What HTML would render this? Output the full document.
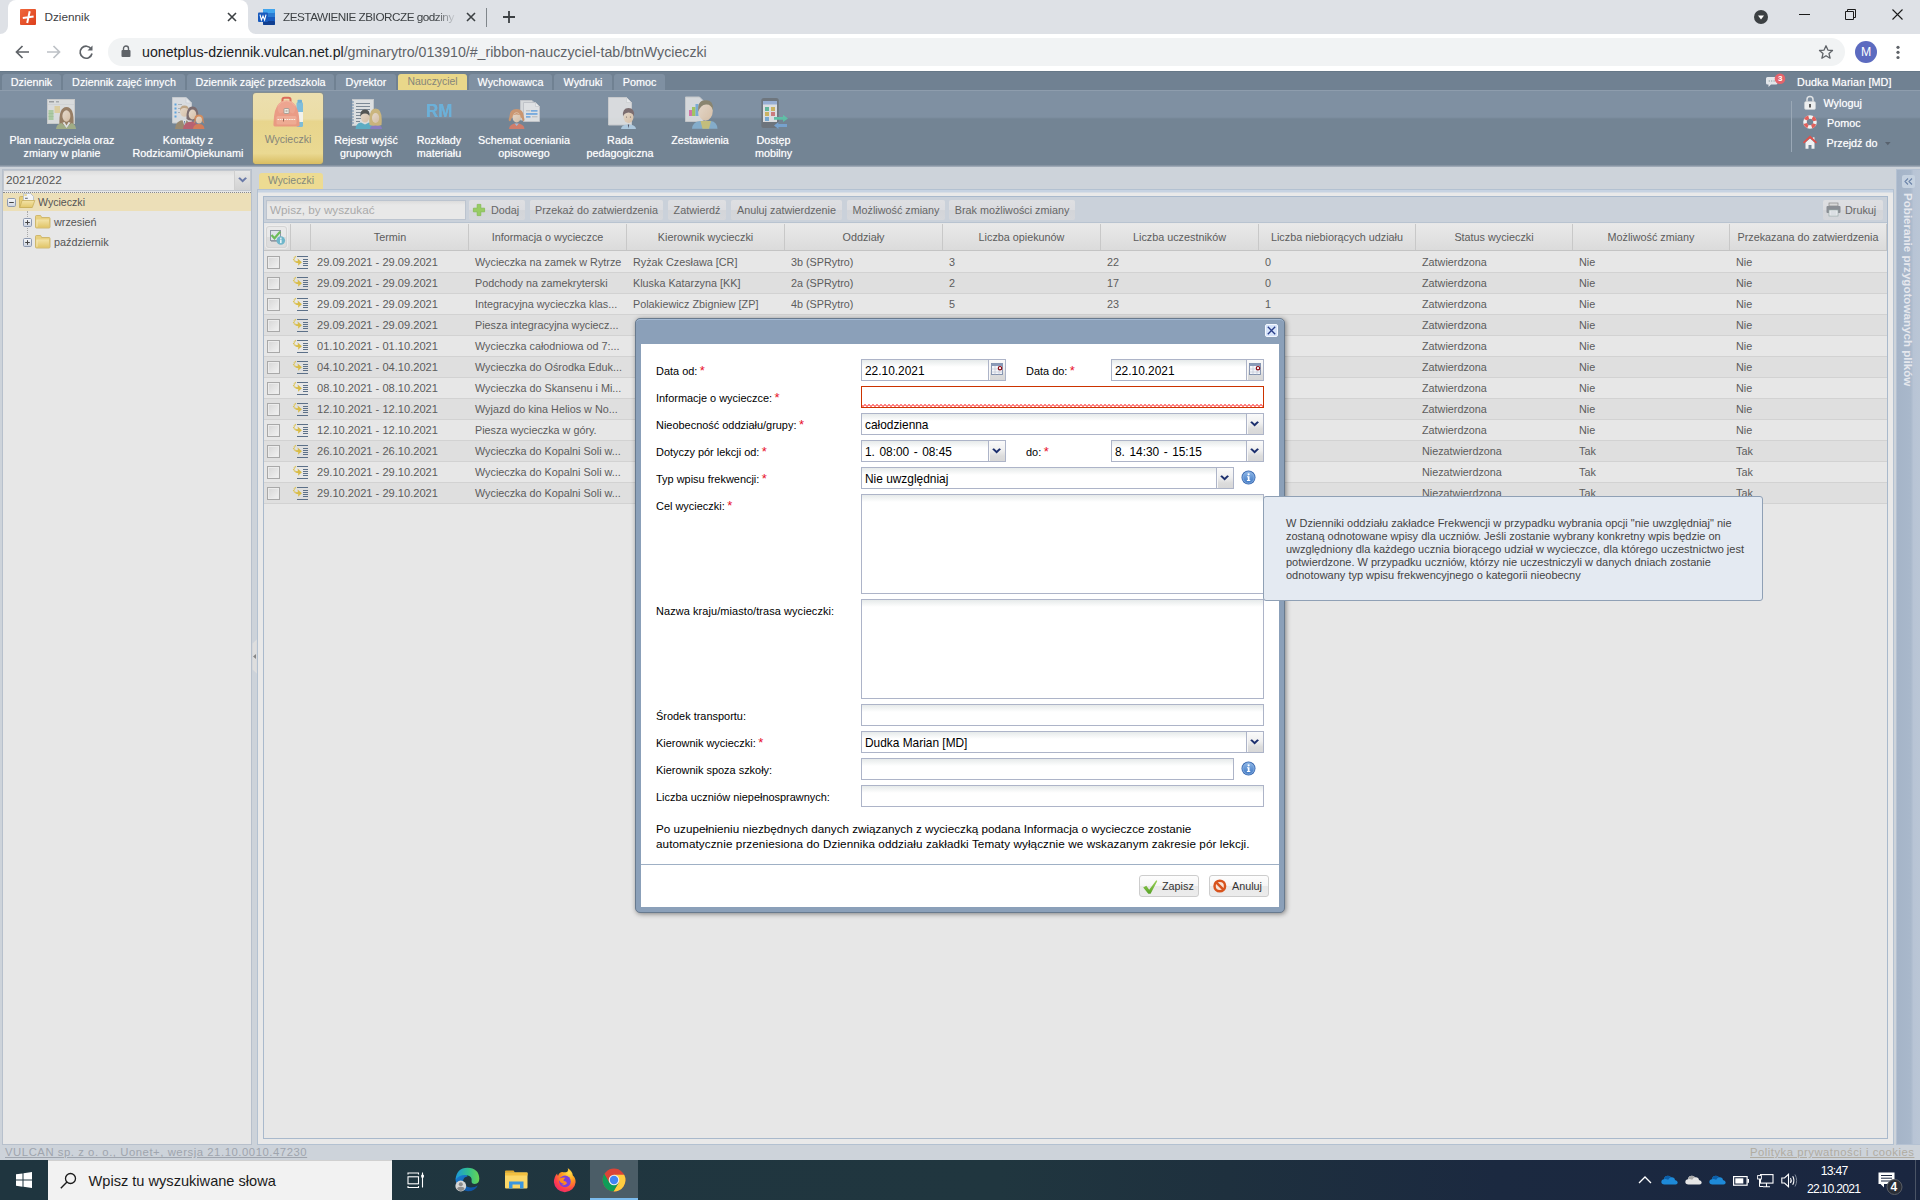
<!DOCTYPE html>
<html><head><meta charset="utf-8"><title>Dziennik</title>
<style>
*{box-sizing:border-box;margin:0;padding:0}
html,body{width:1920px;height:1200px;overflow:hidden;background:#cdd3da;font-family:"Liberation Sans",sans-serif;font-size:11px;color:#555}
.a{position:absolute;white-space:nowrap}
svg{position:absolute;overflow:visible}
/* chrome */
#tabbar{left:0;top:0;width:1920px;height:34px;background:#dee1e6}
#tab1{left:8px;top:0;width:240px;height:34px;background:#fff;border-radius:8px 8px 0 0}
#toolbar{left:0;top:34px;width:1920px;height:37px;background:#fff}
#urlpill{left:108px;top:38px;width:1737px;height:28px;border-radius:14px;background:#f1f3f4}
.ct{font-size:11.75px;color:#3c4043;line-height:14px}
/* ribbon */
#rtabs{left:0;top:71px;width:1920px;height:20px;background:#708192;border-top:1px solid #667888}
.rt{top:74px;height:16px;background:#7f90a2;border-radius:3px 3px 0 0;color:#fff;text-align:center;line-height:16px;font-size:10.8px;text-shadow:0 0 1px rgba(255,255,255,.5)}
#rbody{left:0;top:90px;width:1920px;height:76px;background:linear-gradient(#8e9dad 0,#8e9dad 1px,#7f90a2 1px,#7f90a2 27px,#738494 29px,#738494 100%)}
.rb{color:#fff;text-align:center;font-size:10.8px;line-height:13px;text-shadow:0 0 1px rgba(255,255,255,.6);transform:translateX(-50%)}
.rr{color:#fff;font-size:10.8px;line-height:13px;text-shadow:0 0 1px rgba(255,255,255,.6)}
/* main */
.tb{top:200px;height:20px;background:linear-gradient(#dedfe2 0,#dbdce0 50%,#d3d5d9 50%,#d5d7db 100%);border-radius:2px;color:#666;font-size:10.8px;line-height:20px;text-align:center}
.hd{top:224px;height:26px;line-height:26px;text-align:center;color:#5c5c5c;font-size:10.8px;border-right:1px solid #c8c8c8}
.row{left:264px;width:1623px;height:21px;border-bottom:1px solid #d2d2d2}
.c{top:0;height:20px;line-height:20px;font-size:10.8px;color:#5c5c5c}
.cb{left:3px;top:4px;width:13px;height:13px;border:1px solid #a8a8a8;background:linear-gradient(135deg,#d6d6d6,#f2f2f2);box-shadow:inset 0 0 0 1px #ececec}
/* modal */
.lb{left:656px;color:#000;font-size:10.95px;line-height:14px}
.lb i,.lb2 i{color:#e8102a;font-style:normal;margin-left:2.5px;font-size:13px;line-height:10px;position:relative;top:.4px}
.in{height:22px;border:1px solid #adb4c8;background:linear-gradient(#e6eaea 0,#fff 7px);color:#000;font-size:11.9px;line-height:22px;padding-left:3px}
.tr{width:17px;height:22px;border:1px solid #adb4c8;border-left:0;background:linear-gradient(#fafafa 0,#f0f0f0 45%,#dcdcdc 75%,#d8d8d8 100%);box-shadow:inset 1px 0 0 #f8f8f8}
.btn{top:875px;height:22px;border:1px solid #cdcdcd;border-radius:3px;background:linear-gradient(#fdfdfd 0,#f6f6f6 48%,#e9e9e9 52%,#ececec 100%);color:#333;font-size:10.8px;line-height:20px}
/* taskbar */
#taskbar{left:0;top:1160px;width:1920px;height:40px;background:linear-gradient(90deg,#1f353f 0,#20363f 52%,#1e303e 64%,#1b2940 78%,#1a2640 100%)}
.tk{color:#fff;font-size:12.2px;letter-spacing:-.78px;line-height:14px}
</style></head><body>
<!-- CHROME -->
<div class="a" id="tabbar"></div>
<div class="a" id="tab1"></div>
<svg style="left:0;top:26px" width="8" height="8"><path d="M0 8 H8 V0 A8 8 0 0 1 0 8Z" fill="#fff"/></svg>
<svg style="left:248px;top:26px" width="8" height="8"><path d="M8 8 H0 V0 A8 8 0 0 0 8 8Z" fill="#fff"/></svg>
<!-- favicon 1 -->
<div class="a" style="left:20px;top:9px;width:16px;height:16px;background:linear-gradient(135deg,#f0683c,#dd3f1c);border-radius:1px"></div>
<svg style="left:20px;top:9px" width="16" height="16"><path d="M9.700 2.300 L7.200 14 M2.800 9 L13.600 7.600" stroke="#fff" stroke-width="2" fill="none"/></svg>
<div class="a ct" style="left:44.5px;top:10px">Dziennik</div>
<svg style="left:227px;top:12px" width="10" height="10"><path d="M1 1 L9 9 M9 1 L1 9" stroke="#3c4043" stroke-width="1.6" fill="none"/></svg>
<!-- word icon -->
<svg style="left:258px;top:9px" width="17" height="16"><rect x="5" y="0" width="12" height="16" rx="1" fill="#2b7cd3"/><rect x="5" y="8" width="12" height="4" fill="#185abd"/><rect x="5" y="12" width="12" height="4" rx="1" fill="#103f91"/><rect x="5" y="0" width="12" height="4" rx="1" fill="#41a5ee"/><rect x="0" y="3.5" width="10" height="9.5" rx="1" fill="#185abd"/><path d="M2 5.6 L3.4 11 L5 7 L6.6 11 L8 5.6" stroke="#fff" stroke-width="1.1" fill="none"/></svg>
<div class="a ct" style="left:283px;top:10px;width:173px;overflow:hidden;letter-spacing:-.5px;-webkit-mask-image:linear-gradient(90deg,#000 152px,transparent 174px)">ZESTAWIENIE ZBIORCZE godziny p</div>
<svg style="left:466px;top:12px" width="10" height="10"><path d="M1 1 L9 9 M9 1 L1 9" stroke="#3c4043" stroke-width="1.6" fill="none"/></svg>
<div class="a" style="left:486px;top:8px;width:1px;height:19px;background:#80868b"></div>
<svg style="left:503px;top:11px" width="12" height="12"><path d="M6 0 V12 M0 6 H12" stroke="#3c4043" stroke-width="1.8" fill="none"/></svg>
<!-- window controls -->
<svg style="left:1754px;top:10px" width="14" height="14"><circle cx="7" cy="7" r="7" fill="#3c4043"/><path d="M4 5.5 H10 L7 9.5Z" fill="#fff"/></svg>
<svg style="left:1799px;top:9px" width="11" height="11"><path d="M0 5.5 H11" stroke="#1b1b1b" stroke-width="1"/></svg>
<svg style="left:1845px;top:9px" width="11" height="11"><path d="M0.5 2.5 H8.5 V10.5 H0.5Z M2.5 2.5 V0.5 H10.5 V8.5 H8.5" stroke="#1b1b1b" stroke-width="1" fill="none"/></svg>
<svg style="left:1892px;top:9px" width="11" height="11"><path d="M0.5 0.5 L10.5 10.5 M10.5 0.5 L0.5 10.5" stroke="#1b1b1b" stroke-width="1.1" fill="none"/></svg>
<!-- toolbar -->
<div class="a" id="toolbar"></div>
<svg style="left:15px;top:45px" width="14" height="14"><path d="M14 7 H2 M7.5 1 L1.5 7 L7.5 13" stroke="#5f6368" stroke-width="1.7" fill="none"/></svg>
<svg style="left:47px;top:45px" width="14" height="14"><path d="M0 7 H12 M6.5 1 L12.5 7 L6.5 13" stroke="#bdc1c6" stroke-width="1.7" fill="none"/></svg>
<svg style="left:78px;top:44px" width="16" height="16"><path d="M13.2 5 A6 6 0 1 0 14 9.5" stroke="#5f6368" stroke-width="1.7" fill="none"/><path d="M14.5 1.5 V6.5 H9.5Z" fill="#5f6368"/></svg>
<div class="a" id="urlpill"></div>
<svg style="left:121px;top:45px" width="10" height="12"><rect x="0.5" y="5" width="9" height="7" rx="1" fill="#5f6368"/><path d="M2.5 5.5 V3.5 A2.5 2.5 0 0 1 7.5 3.5 V5.5" stroke="#5f6368" stroke-width="1.4" fill="none"/></svg>
<div class="a" style="left:142px;top:43px;font-size:14.18px;line-height:18px;color:#202124">uonetplus-dziennik.vulcan.net.pl<span style="color:#5f6368">/gminarytro/013910/#_ribbon-nauczyciel-tab/btnWycieczki</span></div>
<svg style="left:1818px;top:44px" width="16" height="16"><path d="M8 1.8 L9.9 6.1 L14.5 6.5 L11 9.6 L12.1 14.2 L8 11.7 L3.9 14.2 L5 9.6 L1.5 6.5 L6.1 6.1Z" stroke="#5f6368" stroke-width="1.3" fill="none" stroke-linejoin="round"/></svg>
<div class="a" style="left:1855px;top:41px;width:22px;height:22px;border-radius:11px;background:#5c6bc0;color:#fff;font-size:12.300px;line-height:22px;text-align:center">M</div>
<svg style="left:1896px;top:45px" width="4" height="15"><circle cx="2" cy="2.3" r="1.6" fill="#5f6368"/><circle cx="2" cy="7.3" r="1.6" fill="#5f6368"/><circle cx="2" cy="12.5" r="1.6" fill="#5f6368"/></svg>
<!-- RIBBON -->
<div class="a" id="rtabs"></div>
<div class="a rt" style="left:2px;width:59px">Dziennik</div>
<div class="a rt" style="left:63px;width:122px">Dziennik zajęć innych</div>
<div class="a rt" style="left:187px;width:147px">Dziennik zajęć przedszkola</div>
<div class="a rt" style="left:336px;width:60px">Dyrektor</div>
<div class="a rt" style="left:398px;width:69px;background:#e9d78a;color:#85857a;text-shadow:none;font-size:10.400px">Nauczyciel</div>
<div class="a rt" style="left:469px;width:83px">Wychowawca</div>
<div class="a rt" style="left:554px;width:58px">Wydruki</div>
<div class="a rt" style="left:614px;width:51px">Pomoc</div>
<div class="a" id="rbody"></div>
<div class="a" style="left:0;top:165px;width:1920px;height:2px;background:linear-gradient(#7b8a99,#a9b3bf)"></div>
<!-- selected button -->
<div class="a" style="left:253px;top:93px;width:70px;height:71px;border-radius:3px;background:linear-gradient(#ecdfaf 0,#ebdda6 36%,#e8d58d 40%,#ead992 85%,#d9bd62 100%);box-shadow:0 0 0 1px rgba(150,140,100,.25)"></div>
<!-- icons -->
<svg style="opacity:.85;left:46px;top:97px" width="32" height="34"><defs><linearGradient id="skin" x1="0" y1="0" x2="1" y2="1"><stop offset="0" stop-color="#f6e6d4"/><stop offset="1" stop-color="#e6c8a8"/></linearGradient></defs><rect x="1.500" y="2.500" width="27" height="24" fill="#e9e9e7" stroke="#d4d4d2"/><rect x="3" y="4" width="5" height="1.500" fill="#a0a0a0"/><rect x="10" y="4" width="3" height="1.500" fill="#b0b0b0"/><rect x="2" y="7" width="26" height=".6" fill="#d8d8d8"/><rect x="8.500" y="9" width="5.500" height="7" fill="#ecd8a0"/><rect x="2.500" y="13" width="5" height="10" fill="#b4d4a4"/><path d="M2.500 16.500 H7.500 M2.500 19.500 H7.500" stroke="#a0c490" stroke-width=".6"/><path d="M13.500 28 Q12.500 10 20.500 10 Q28.500 10 27.500 28Z" fill="#9c7c5c"/><ellipse cx="20.400" cy="19" rx="4" ry="5.800" fill="url(#skin)"/><path d="M10 32 Q10.500 27 15.500 26 L20.500 30.500 L25.500 26 Q29.500 27 30 32Z" fill="#a8b484"/><path d="M16.500 25.800 L20.500 31 L24.500 25.800 L22.500 25 L20.500 28.500 L18.500 25Z" fill="#f4f2ec"/></svg>
<svg style="opacity:.85;left:171px;top:97px" width="34" height="34"><path d="M1.500 .5 H15 L20.500 6 V26 H1.500Z" fill="#e8e9ea" stroke="#d2d4d6"/><path d="M15 .5 V6 H20.500Z" fill="#f6f6f6" stroke="#d2d4d6" stroke-width=".6"/><rect x="3.500" y="6.500" width="2" height="2" fill="#58a8e8"/><rect x="3.500" y="10.500" width="2" height="2" fill="#58a8e8"/><rect x="3.500" y="14.500" width="2" height="2" fill="#58a8e8"/><rect x="3.500" y="18.500" width="2" height="2" fill="#58a8e8"/><path d="M7 7.500 H11 M7 11.500 H10 M7 15.500 H9" stroke="#a8a8a8" stroke-width=".8"/><path d="M4 32 Q4.500 23 13.500 23 Q19 23 19 32Z" fill="#a08c6c"/><path d="M11.500 23 L13.500 29 L15.500 23Z" fill="#f4f4f4"/><path d="M13 24 L13.500 28.500 L14 24Z" fill="#5878a8"/><ellipse cx="13.400" cy="14.500" rx="4.300" ry="5.300" fill="url(#skin)"/><path d="M9 14 Q8.500 8.500 13.500 8.500 Q18 8.500 17.800 13 Q16 10.500 13 11 Q10 11 9 14Z" fill="#c8a880"/><path d="M12 32 Q12.500 24.500 21.500 24.500 Q26.500 24.500 26.500 32Z" fill="#c45c6c"/><path d="M15.500 22 Q15 9.500 21.500 9.500 Q28 9.500 27.500 22 Q25 24 21.500 23.500 Q18 24 15.500 22Z" fill="#7c6868"/><ellipse cx="21.500" cy="17.500" rx="3.800" ry="5" fill="url(#skin)"/><path d="M22 32 Q22.500 27 28 27 Q33 27 33.500 32Z" fill="#e47c50"/><path d="M23.500 23.500 Q22.500 17.500 28 17.500 Q33 17.500 32.500 23.500 L33.500 27 Q31 25 30.500 22 L25.500 22 Q25 25 22.500 27Z" fill="#e08c54"/><ellipse cx="28" cy="23" rx="3" ry="3.500" fill="url(#skin)"/></svg>
<svg style="opacity:.85;left:272px;top:96px" width="34" height="34"><rect x="24.500" y="6" width="6.500" height="25" rx="1.500" fill="#6cb8e4"/><rect x="25.500" y="3.800" width="4.500" height="3" rx=".8" fill="#58a8dc"/><rect x="24.500" y="16" width="6.500" height="10" fill="#f4f6f8"/><path d="M10.500 6 V3.500 Q10.500 1.800 12.500 1.800 H16.500 Q18.500 1.800 18.500 3.500 V6" stroke="#d8584c" stroke-width="2" fill="none"/><path d="M3 30.500 Q1 30.500 1.500 27 Q2 12 7 7.500 Q10 4.500 14.500 4.500 Q19 4.500 22 7.500 Q27 12 27.500 27 Q28 30.500 26 30.500Z" fill="#ea9080"/><path d="M5.500 10 Q9 5 14.500 5 Q20 5 23.500 10 Q24 15 21 17.500 Q14.500 14 8 17.500 Q5 15 5.500 10Z" fill="#ee9c8c"/><path d="M5.500 10 Q9 5 14.500 5 Q20 5 23.500 10" stroke="#f4b4a4" stroke-width=".8" fill="none"/><rect x="12" y="12.500" width="5" height="5" rx=".8" fill="#ececec" stroke="#8c8c8c" stroke-width=".8"/><rect x="13.500" y="14" width="2" height="2" fill="#b4b4b4"/><path d="M4.500 21.500 Q4.500 20 6 20 H23 Q24.500 20 24.500 21.500 V27 Q24.500 28.500 23 28.500 H6 Q4.500 28.500 4.500 27Z" fill="#f0a494"/><path d="M5.500 23.500 H23.500" stroke="#fff" stroke-width=".9" stroke-dasharray="1.600 .7"/><rect x="11" y="22.500" width="1" height="3" fill="#8c5048"/></svg>
<svg style="opacity:.85;left:350px;top:97px" width="34" height="34"><rect x="2.500" y="2.500" width="21" height="26" fill="#ededec" stroke="#d0d2d4"/><path d="M6 6.500 H20 M6 9.500 H20 M6 12.500 H20 M6 15.500 H14 M6 18.500 H12 M6 21.500 H11 M6 24.500 H10" stroke="#7c8894" stroke-width="1"/><path d="M.8 5 H4 M.8 8 H4 M.8 11 H4 M.8 14 H4 M.8 17 H4 M.8 20 H4 M.8 23 H4 M.8 26 H4" stroke="#6c8cac" stroke-width="1.100"/><path d="M5.500 32 Q6 26 11 25.500 L15 27.500 L19 25.500 Q24 26 24.500 32Z" fill="#58b4cc"/><ellipse cx="15" cy="20" rx="4.300" ry="5.500" fill="url(#skin)"/><path d="M10.500 20 Q9.500 12.500 15 12.500 Q20.500 12.500 19.500 20 Q19 16.500 15 16.500 Q11 16.500 10.500 20Z" fill="#4c4a46"/><path d="M20 32 Q20.500 27.500 26 27.500 Q31.500 27.500 32 32Z" fill="#8c7cc8"/><path d="M19.500 28 Q18 11.500 25.500 11.500 Q33 11.500 31.500 28 Q29 29 25.500 28.500 Q22 29 19.500 28Z" fill="#d8bc78"/><ellipse cx="25.600" cy="21" rx="3.600" ry="5" fill="url(#skin)"/></svg>
<div class="a" style="left:425.500px;top:100px;font-weight:bold;font-size:18.700px;line-height:22px;color:#6cb0d8;transform:scaleX(.905);transform-origin:0 0;text-shadow:0 0 .6px #6cb0d8">RM</div>
<svg style="opacity:.85;left:508px;top:97px" width="34" height="34"><path d="M12.500 3.500 H24 L28 7.500 V23 H12.500Z" fill="#e4e5e6" stroke="#cccdd0"/><path d="M15.500 5.500 H27.500 L31.500 9.500 V24.500 H15.500Z" fill="#efefef" stroke="#cccdd0"/><path d="M27.500 5.500 V9.500 H31.500Z" fill="#fafafa" stroke="#cccdd0" stroke-width=".6"/><path d="M18 13.800 H22.500 M18 16.800 H18 M24 19.800 H29.500" stroke="#b8b8b8" stroke-width=".9"/><rect x="23" y="13" width="6.500" height="1.700" fill="#78b0e8"/><rect x="18" y="16" width="11.500" height="1.900" fill="#78b0e8"/><rect x="18" y="19" width="4.500" height="1.700" fill="#78b0e8"/><path d="M1 32 Q1.500 26.500 8.500 26.500 Q16 26.500 16.500 32Z" fill="#e07c64"/><path d="M6.500 26.500 L8.600 29 L10.800 26.500Z" fill="#a8c4e4"/><path d="M2.500 24 Q-.5 25 1.500 19.500 Q1.500 12 8.600 12 Q15.500 12 15.800 19.500 Q17.500 25 14.800 24 Q14 21 13 20.500 L4.300 20.500 Q3.500 21 2.500 24Z" fill="#d89868"/><ellipse cx="8.600" cy="20.500" rx="4" ry="5" fill="url(#skin)"/><path d="M4.500 18.500 Q8.600 13.500 12.800 18.500 Q8.600 16.500 4.500 18.500Z" fill="#d89868"/></svg>
<svg style="opacity:.85;left:607px;top:96px" width="32" height="36"><path d="M1.500 1.500 H19.500 L24.500 6.500 V29 H1.500Z" fill="#e8e8e8" stroke="#d4d4d4"/><path d="M19.500 1.500 V6.500 H24.500Z" fill="#f8f8f8" stroke="#d4d4d4" stroke-width=".6"/><path d="M14 33 Q14.500 28.500 21.500 28.500 Q28.500 28.500 29 33Z" fill="#b8d4ea"/><path d="M20.800 28.500 L21.500 32.500 L22.200 28.500Z" fill="#4c4c5c"/><ellipse cx="21.500" cy="21" rx="5" ry="6" fill="url(#skin)"/><path d="M16 20.500 Q15 12 21.500 12 Q28 12 27 20.500 Q26 17 21.500 16.500 Q17 17 16 20.500Z" fill="#7c6868"/><circle cx="19.500" cy="21" r=".6" fill="#6c5c54"/><circle cx="23.500" cy="21" r=".6" fill="#6c5c54"/></svg>
<svg style="opacity:.85;left:684px;top:96px" width="36" height="36"><path d="M1.500 1 H15.500 L19 4.500 V25.500 H1.500Z" fill="#e5e5e5" stroke="#d0d0d0"/><rect x="5" y="14" width="3" height="6" fill="#e070a8"/><rect x="8" y="11" width="3.500" height="9" fill="#a8cc58"/><rect x="11.500" y="8" width="3" height="12" fill="#78b0dc"/><path d="M8 32.800 Q8.500 26 16 25 H27 Q33 26 33.500 32.800Z" fill="#88b4d4"/><path d="M16.500 25 L18.500 32.800 H25 L27 25Z" fill="#d0c878"/><ellipse cx="21.500" cy="14.700" rx="7.300" ry="10" fill="url(#skin)"/><path d="M14.300 16 Q13 4 21.500 4.300 Q30 4 28.800 14 Q27 8 22 8.500 Q16.500 8.500 14.300 16Z" fill="#8c8468"/></svg>
<svg style="opacity:.85;left:760px;top:97px" width="32" height="34"><rect x="1.300" y="1" width="17.500" height="30" rx="2.500" fill="#6c7278"/><rect x="3" y="4" width="14" height="21" fill="#ececec"/><rect x="3" y="4" width="14" height="3.500" fill="#9cb4dc"/><rect x="5" y="10" width="4" height="4" fill="#5cbc9c"/><rect x="11" y="10" width="4" height="4" fill="#d8b858"/><rect x="5" y="15" width="4" height="4" fill="#d8b858"/><rect x="11" y="15" width="4" height="4" fill="#d87878"/><rect x="5" y="20" width="4" height="4" fill="#78b0dc"/><path d="M14 20 H23 V17.700 L28 21.400 L23 25 V22.800 H14Z" fill="#5cc8a8"/><path d="M27 27 H18.500 V25 L14 28.500 L18.500 32 V30 H27Z" fill="#78a8d8"/></svg>
<!-- labels -->
<div class="a rb" style="left:62px;top:134px">Plan nauczyciela oraz<br>zmiany w planie</div>
<div class="a rb" style="left:188px;top:134px">Kontakty z<br>Rodzicami/Opiekunami</div>
<div class="a rb" style="left:288px;top:133px;color:#85857a;text-shadow:none;font-size:10.500px">Wycieczki</div>
<div class="a rb" style="left:366px;top:134px">Rejestr wyjść<br>grupowych</div>
<div class="a rb" style="left:439px;top:134px">Rozkłady<br>materiału</div>
<div class="a rb" style="left:524px;top:134px">Schemat oceniania<br>opisowego</div>
<div class="a rb" style="left:620px;top:134px">Rada<br>pedagogiczna</div>
<div class="a rb" style="left:700px;top:134px">Zestawienia</div>
<div class="a rb" style="left:773.500px;top:134px">Dostęp<br>mobilny</div>
<!-- right user area -->
<svg style="left:1765px;top:76px" width="22" height="12"><path d="M1 2.500 Q1 1 2.500 1 H11 Q12.500 1 12.500 2.500 V7 Q12.500 8.500 11 8.500 H6 L3.500 11 V8.500 H2.500 Q1 8.500 1 7Z" fill="#e3e6ea"/><circle cx="4.300" cy="5" r=".7" fill="#9aa"/><circle cx="6.700" cy="5" r=".7" fill="#9aa"/><circle cx="9.100" cy="5" r=".7" fill="#9aa"/><circle cx="15" cy="2.700" r="5.300" fill="#e4646c"/></svg>
<div class="a" style="left:1778px;top:73.500px;font-size:8px;font-weight:bold;color:#fff;line-height:9px">3</div>
<div class="a rr" style="left:1797px;top:75.500px;letter-spacing:.09px">Dudka Marian [MD]</div>
<div class="a" style="left:1791px;top:101px;width:1px;height:51px;background:#9aa8b6"></div>
<svg style="left:1804px;top:95px" width="12" height="15"><path d="M3 7 V4.500 A3 3 0 0 1 9 4.500 V7" stroke="#dfe2e5" stroke-width="1.500" fill="none"/><rect x=".5" y="6.500" width="11" height="8" rx="1.500" fill="#eceeef" stroke="#c9ccd0" stroke-width=".6"/><rect x="5" y="9" width="2" height="3.500" fill="#5a5a5a"/></svg>
<div class="a rr" style="left:1823.500px;top:96.500px">Wyloguj</div>
<svg style="left:1803px;top:115px" width="14" height="14"><circle cx="7" cy="7" r="5" fill="none" stroke="#f2f2f2" stroke-width="3.600"/><circle cx="7" cy="7" r="5" fill="none" stroke="#e0605c" stroke-width="3.600" stroke-dasharray="3.927 3.927" stroke-dashoffset="-1.960"/></svg>
<div class="a rr" style="left:1827px;top:116.500px">Pomoc</div>
<svg style="left:1803px;top:135px" width="14" height="14"><rect x="9.800" y="2.300" width="1.700" height="3.500" fill="#e8e8e8"/><path d="M2.500 7.500 V13.800 H5.500 V10 H8.500 V13.800 H11.500 V7.500 L7 3.500Z" fill="#f0f1f2"/><path d="M.5 7.800 L7 1.800 L13.500 7.800" stroke="#e0504a" stroke-width="1.800" fill="none"/></svg>
<div class="a rr" style="left:1826.500px;top:136.500px">Przejdź do</div>
<svg style="left:1885px;top:142px" width="6" height="4"><path d="M0 0 H5.600 L2.800 3.200Z" fill="#58626e"/></svg>
<!-- MAIN -->
<div class="a" style="left:2px;top:169px;width:250px;height:976px;border:1px solid #b7c0cc;background:#e7e7e7"></div>
<div class="a" style="left:3px;top:170px;width:231px;height:21px;border:1px solid #c2c7ce;border-right:0;background:linear-gradient(#dedede,#e9e9e9 5px);color:#555;font-size:11.8px;line-height:19px;padding-left:2px">2021/2022</div>
<div class="a" style="left:234px;top:170px;width:17px;height:21px;border:1px solid #c2c7ce;border-left:1px solid #cfcfcf;background:linear-gradient(#e6e6e6,#d2d2d2)"></div>
<svg style="left:237.700px;top:177px" width="10" height="6"><path d="M.2 1.300 L1.900 .3 L4.600 2.700 L7.300 .3 L9 1.300 L4.600 5.500Z" fill="#6a7aa8"/></svg>
<div class="a" style="left:3px;top:192px;width:248px;height:1px;border-top:1px dotted #8a8a8a"></div>
<div class="a" style="left:3px;top:193px;width:248px;height:18px;background:#ecdfb8"></div>
<svg width="0" height="0"><defs><linearGradient id="exg" x1="0" y1="0" x2="0" y2="1"><stop offset="0" stop-color="#f8f9fb"/><stop offset="1" stop-color="#ccd3df"/></linearGradient><linearGradient id="fog" x1="0" y1="0" x2="0" y2="1"><stop offset="0" stop-color="#f3e3a8"/><stop offset="1" stop-color="#e2c76c"/></linearGradient></defs></svg>
<div class="a" style="left:27px;top:211px;width:0;height:28px;border-left:1px dotted #a8a8a8"></div>
<svg style="left:7px;top:198px" width="9" height="9"><rect x=".5" y=".5" width="8" height="8" rx="1.200" fill="url(#exg)" stroke="#8e9ab0"/><path d="M2.200 4.500 H6.800" stroke="#444" stroke-width="1"/></svg>
<svg style="left:18px;top:192px" width="18" height="18"><path d="M1.500 5.500 Q1.500 4.500 2.500 4.500 H5.500 L6.500 5.500 H13.500 V15.500 H1.500Z" fill="#e6cd78" stroke="#c9ae5c" stroke-width=".8"/><path d="M5.500 1.500 H12.500 L15.500 4.500 V9 H5.500Z" fill="#f2f4f7" stroke="#b4bcc8" stroke-width=".8"/><rect x="6.300" y="2.300" width="2.500" height="1.500" fill="#e8cf7c"/><path d="M7 6.300 H9.800" stroke="#6a7080" stroke-width="1.100"/><path d="M1.800 15.500 L4 8.500 H16.800 L14.300 15.500Z" fill="url(#fog)" stroke="#c9ae5c" stroke-width=".8"/></svg>
<div class="a" style="left:38px;top:195px;font-size:10.600px;line-height:14px;color:#555">Wycieczki</div>
<svg style="left:23px;top:218px" width="9" height="9"><rect x=".5" y=".5" width="8" height="8" rx="1.200" fill="url(#exg)" stroke="#8e9ab0"/><path d="M2.200 4.500 H6.800 M4.500 2.200 V6.800" stroke="#444" stroke-width="1"/></svg>
<svg style="left:35px;top:215px" width="16" height="14"><path d="M.5 1.500 Q.5 .5 1.500 .5 H5 Q6 .5 6.300 1.500 L6.600 2.500 H14 Q15 2.500 15 3.500 V12 Q15 13 14 13 H1.500 Q.5 13 .5 12Z" fill="#e8d080" stroke="#c9ae5c" stroke-width=".8"/><path d="M1.500 4.500 H14 V12 H1.500Z" fill="url(#fog)"/><path d="M2 4.800 V11.800" stroke="#f8ecc0" stroke-width=".8"/></svg>
<div class="a" style="left:54px;top:215px;font-size:10.800px;line-height:14px;color:#555">wrzesień</div>
<svg style="left:23px;top:238px" width="9" height="9"><rect x=".5" y=".5" width="8" height="8" rx="1.200" fill="url(#exg)" stroke="#8e9ab0"/><path d="M2.200 4.500 H6.800 M4.500 2.200 V6.800" stroke="#444" stroke-width="1"/></svg>
<svg style="left:35px;top:235px" width="16" height="14"><path d="M.5 1.500 Q.5 .5 1.500 .5 H5 Q6 .5 6.300 1.500 L6.600 2.500 H14 Q15 2.500 15 3.500 V12 Q15 13 14 13 H1.500 Q.5 13 .5 12Z" fill="#e8d080" stroke="#c9ae5c" stroke-width=".8"/><path d="M1.500 4.500 H14 V12 H1.500Z" fill="url(#fog)"/><path d="M2 4.800 V11.800" stroke="#f8ecc0" stroke-width=".8"/></svg>
<div class="a" style="left:54px;top:235px;font-size:10.800px;line-height:14px;color:#555">październik</div>
<svg style="left:252px;top:639px" width="5" height="35"><path d="M.5 4.500 L4.800 .5 V34.500 L.5 30.500Z" fill="#dedede"/><path d="M4 15 L1 17.500 L4 20Z" fill="#858585"/></svg>
<div class="a" style="left:259px;top:173px;width:64px;height:16px;background:#eddb92;border-radius:3px 3px 0 0;color:#83897c;font-size:10.400px;line-height:16px;text-align:center">Wycieczki</div>
<div class="a" style="left:257px;top:189px;width:1637px;height:956px;border:1px solid #b3c1d1;background:linear-gradient(#c7d3e2 0,#c7d3e2 2px,#e9e9e9 3px,#e9e9e9 100%)"></div>
<div class="a" style="left:263px;top:196px;width:1625px;height:943px;border:1px solid #a9b9cc;background:#e7e7e7"></div>
<div class="a" style="left:264px;top:197px;width:1623px;height:26px;background:#cad1da;border-bottom:1px solid #b8c3d0"></div>
<div class="a" style="left:266px;top:200px;width:200px;height:20px;border:1px solid #bcc4cf;background:linear-gradient(#dcdcdc,#e8e8e8 4px);color:#aaa;font-size:11.7px;line-height:18px;padding-left:3px">Wpisz, by wyszukać</div>
<div class="a tb" style="left:469px;width:56px;text-align:left;padding-left:22px">Dodaj</div>
<svg style="left:473px;top:204px" width="12" height="12"><path d="M4.200 .4 H7.800 V4.200 H11.600 V7.800 H7.800 V11.600 H4.200 V7.800 H.4 V4.200 H4.200Z" fill="#98cc64" stroke="#84bc50" stroke-width=".8"/></svg>
<div class="a tb" style="left:530px;width:133px">Przekaż do zatwierdzenia</div>
<div class="a tb" style="left:668px;width:58px">Zatwierdź</div>
<div class="a tb" style="left:731px;width:111px">Anuluj zatwierdzenie</div>
<div class="a tb" style="left:847px;width:98px">Możliwość zmiany</div>
<div class="a tb" style="left:949px;width:126px">Brak możliwości zmiany</div>
<div class="a tb" style="left:1823px;width:60px;text-align:left;padding-left:22px">Drukuj</div>
<svg style="left:1826px;top:202px" width="15" height="15"><rect x="3" y="1" width="9" height="3" fill="#d8d8d8" stroke="#8a8a8a" stroke-width=".7"/><rect x=".5" y="4" width="14" height="7" rx="1" fill="#8a8e94"/><rect x="3" y="8" width="9" height="6" fill="#eef0f2" stroke="#9aa" stroke-width=".7"/><path d="M4.500 10 H10.500 M4.500 12 H10.500" stroke="#b8c0c8" stroke-width=".7"/></svg>
<div class="a" style="left:264px;top:224px;width:1623px;height:27px;background:linear-gradient(#e9e9e9,#dbdbdb);border-bottom:1px solid #c4c4c4"></div>
<div class="a hd" style="left:264px;width:27px"></div>
<div class="a" style="left:266px;top:226px;width:21px;height:22px;border:1px solid #d4d4d4;border-radius:3px;background:linear-gradient(#e9e9e9 50%,#dddddd 50%);box-shadow:0 0 0 1px rgba(240,240,240,.7)"></div>
<svg style="left:269px;top:229px" width="18" height="18"><rect x="1.500" y="1.500" width="10" height="10" fill="#dfe3ea" stroke="#8c96a2" stroke-width="1"/><path d="M2 12.300 H10" stroke="#9aa2ac" stroke-width="1"/><path d="M2.500 6 L5.500 9.300 L11.200 2.600" stroke="#6cbc58" stroke-width="2.200" fill="none"/><circle cx="11.800" cy="11.500" r="4.300" fill="#6fb6ca"/><rect x="11.200" y="10.500" width="1.300" height="3.600" fill="#fff"/><rect x="11.200" y="8.600" width="1.300" height="1.300" fill="#fff"/></svg>
<div class="a hd" style="left:291px;width:20px"></div>
<div class="a hd" style="left:312px;width:157px">Termin</div>
<div class="a hd" style="left:469px;width:158px">Informacja o wycieczce</div>
<div class="a hd" style="left:627px;width:158px">Kierownik wycieczki</div>
<div class="a hd" style="left:785px;width:158px">Oddziały</div>
<div class="a hd" style="left:943px;width:158px">Liczba opiekunów</div>
<div class="a hd" style="left:1101px;width:158px">Liczba uczestników</div>
<div class="a hd" style="left:1259px;width:157px">Liczba niebiorących udziału</div>
<div class="a hd" style="left:1416px;width:157px">Status wycieczki</div>
<div class="a hd" style="left:1573px;width:157px">Możliwość zmiany</div>
<div class="a hd" style="left:1730px;width:157px">Przekazana do zatwierdzenia</div>
<div class="a row" style="top:252px;background:#e7e7e7">
<div class="a cb"></div>
<svg style="left:28px;top:3px" width="17" height="15"><path d="M5 1.500 H16 M5 13.500 H16 M11 4.500 H16 M11 6.500 H16 M11 8.500 H16 M11 10.500 H16" stroke="#5c7088" stroke-width="1"/><path d="M3.800 1.300 L1.600 3.800 Q1.800 6.500 6 7.200" stroke="#dcc458" stroke-width="1.500" fill="none" stroke-dasharray="1.200 .5"/><path d="M5.600 3.600 L9.900 7.300 L6 10.800 L6.300 8.300 Q4 8.300 2.500 6.500 L5.900 6.200Z" fill="#d8bc48"/></svg>
<div class="a c" style="left:53px;font-size:11.1px">29.09.2021 - 29.09.2021</div>
<div class="a c" style="left:211px">Wycieczka na zamek w Rytrze</div>
<div class="a c" style="left:369px">Ryżak Czesława [CR]</div>
<div class="a c" style="left:527px">3b (SPRytro)</div>
<div class="a c" style="left:685px">3</div>
<div class="a c" style="left:843px">22</div>
<div class="a c" style="left:1001px">0</div>
<div class="a c" style="left:1158px">Zatwierdzona</div>
<div class="a c" style="left:1315px">Nie</div>
<div class="a c" style="left:1472px">Nie</div>
</div>
<div class="a row" style="top:273px;background:#dfdfdf">
<div class="a cb"></div>
<svg style="left:28px;top:3px" width="17" height="15"><path d="M5 1.500 H16 M5 13.500 H16 M11 4.500 H16 M11 6.500 H16 M11 8.500 H16 M11 10.500 H16" stroke="#5c7088" stroke-width="1"/><path d="M3.800 1.300 L1.600 3.800 Q1.800 6.500 6 7.200" stroke="#dcc458" stroke-width="1.500" fill="none" stroke-dasharray="1.200 .5"/><path d="M5.600 3.600 L9.900 7.300 L6 10.800 L6.300 8.300 Q4 8.300 2.500 6.500 L5.900 6.200Z" fill="#d8bc48"/></svg>
<div class="a c" style="left:53px;font-size:11.1px">29.09.2021 - 29.09.2021</div>
<div class="a c" style="left:211px">Podchody na zamekryterski</div>
<div class="a c" style="left:369px">Kluska Katarzyna [KK]</div>
<div class="a c" style="left:527px">2a (SPRytro)</div>
<div class="a c" style="left:685px">2</div>
<div class="a c" style="left:843px">17</div>
<div class="a c" style="left:1001px">0</div>
<div class="a c" style="left:1158px">Zatwierdzona</div>
<div class="a c" style="left:1315px">Nie</div>
<div class="a c" style="left:1472px">Nie</div>
</div>
<div class="a row" style="top:294px;background:#e7e7e7">
<div class="a cb"></div>
<svg style="left:28px;top:3px" width="17" height="15"><path d="M5 1.500 H16 M5 13.500 H16 M11 4.500 H16 M11 6.500 H16 M11 8.500 H16 M11 10.500 H16" stroke="#5c7088" stroke-width="1"/><path d="M3.800 1.300 L1.600 3.800 Q1.800 6.500 6 7.200" stroke="#dcc458" stroke-width="1.500" fill="none" stroke-dasharray="1.200 .5"/><path d="M5.600 3.600 L9.900 7.300 L6 10.800 L6.300 8.300 Q4 8.300 2.500 6.500 L5.900 6.200Z" fill="#d8bc48"/></svg>
<div class="a c" style="left:53px;font-size:11.1px">29.09.2021 - 29.09.2021</div>
<div class="a c" style="left:211px">Integracyjna wycieczka klas...</div>
<div class="a c" style="left:369px">Polakiewicz Zbigniew [ZP]</div>
<div class="a c" style="left:527px">4b (SPRytro)</div>
<div class="a c" style="left:685px">5</div>
<div class="a c" style="left:843px">23</div>
<div class="a c" style="left:1001px">1</div>
<div class="a c" style="left:1158px">Zatwierdzona</div>
<div class="a c" style="left:1315px">Nie</div>
<div class="a c" style="left:1472px">Nie</div>
</div>
<div class="a row" style="top:315px;background:#dfdfdf">
<div class="a cb"></div>
<svg style="left:28px;top:3px" width="17" height="15"><path d="M5 1.500 H16 M5 13.500 H16 M11 4.500 H16 M11 6.500 H16 M11 8.500 H16 M11 10.500 H16" stroke="#5c7088" stroke-width="1"/><path d="M3.800 1.300 L1.600 3.800 Q1.800 6.500 6 7.200" stroke="#dcc458" stroke-width="1.500" fill="none" stroke-dasharray="1.200 .5"/><path d="M5.600 3.600 L9.900 7.300 L6 10.800 L6.300 8.300 Q4 8.300 2.500 6.500 L5.900 6.200Z" fill="#d8bc48"/></svg>
<div class="a c" style="left:53px;font-size:11.1px">29.09.2021 - 29.09.2021</div>
<div class="a c" style="left:211px">Piesza integracyjna wyciecz...</div>
<div class="a c" style="left:1158px">Zatwierdzona</div>
<div class="a c" style="left:1315px">Nie</div>
<div class="a c" style="left:1472px">Nie</div>
</div>
<div class="a row" style="top:336px;background:#e7e7e7">
<div class="a cb"></div>
<svg style="left:28px;top:3px" width="17" height="15"><path d="M5 1.500 H16 M5 13.500 H16 M11 4.500 H16 M11 6.500 H16 M11 8.500 H16 M11 10.500 H16" stroke="#5c7088" stroke-width="1"/><path d="M3.800 1.300 L1.600 3.800 Q1.800 6.500 6 7.200" stroke="#dcc458" stroke-width="1.500" fill="none" stroke-dasharray="1.200 .5"/><path d="M5.600 3.600 L9.900 7.300 L6 10.800 L6.300 8.300 Q4 8.300 2.500 6.500 L5.900 6.200Z" fill="#d8bc48"/></svg>
<div class="a c" style="left:53px;font-size:11.1px">01.10.2021 - 01.10.2021</div>
<div class="a c" style="left:211px">Wycieczka całodniowa od 7:...</div>
<div class="a c" style="left:1158px">Zatwierdzona</div>
<div class="a c" style="left:1315px">Nie</div>
<div class="a c" style="left:1472px">Nie</div>
</div>
<div class="a row" style="top:357px;background:#dfdfdf">
<div class="a cb"></div>
<svg style="left:28px;top:3px" width="17" height="15"><path d="M5 1.500 H16 M5 13.500 H16 M11 4.500 H16 M11 6.500 H16 M11 8.500 H16 M11 10.500 H16" stroke="#5c7088" stroke-width="1"/><path d="M3.800 1.300 L1.600 3.800 Q1.800 6.500 6 7.200" stroke="#dcc458" stroke-width="1.500" fill="none" stroke-dasharray="1.200 .5"/><path d="M5.600 3.600 L9.900 7.300 L6 10.800 L6.300 8.300 Q4 8.300 2.500 6.500 L5.900 6.200Z" fill="#d8bc48"/></svg>
<div class="a c" style="left:53px;font-size:11.1px">04.10.2021 - 04.10.2021</div>
<div class="a c" style="left:211px">Wycieczka do Ośrodka Eduk...</div>
<div class="a c" style="left:1158px">Zatwierdzona</div>
<div class="a c" style="left:1315px">Nie</div>
<div class="a c" style="left:1472px">Nie</div>
</div>
<div class="a row" style="top:378px;background:#e7e7e7">
<div class="a cb"></div>
<svg style="left:28px;top:3px" width="17" height="15"><path d="M5 1.500 H16 M5 13.500 H16 M11 4.500 H16 M11 6.500 H16 M11 8.500 H16 M11 10.500 H16" stroke="#5c7088" stroke-width="1"/><path d="M3.800 1.300 L1.600 3.800 Q1.800 6.500 6 7.200" stroke="#dcc458" stroke-width="1.500" fill="none" stroke-dasharray="1.200 .5"/><path d="M5.600 3.600 L9.900 7.300 L6 10.800 L6.300 8.300 Q4 8.300 2.500 6.500 L5.900 6.200Z" fill="#d8bc48"/></svg>
<div class="a c" style="left:53px;font-size:11.1px">08.10.2021 - 08.10.2021</div>
<div class="a c" style="left:211px">Wycieczka do Skansenu i Mi...</div>
<div class="a c" style="left:1158px">Zatwierdzona</div>
<div class="a c" style="left:1315px">Nie</div>
<div class="a c" style="left:1472px">Nie</div>
</div>
<div class="a row" style="top:399px;background:#dfdfdf">
<div class="a cb"></div>
<svg style="left:28px;top:3px" width="17" height="15"><path d="M5 1.500 H16 M5 13.500 H16 M11 4.500 H16 M11 6.500 H16 M11 8.500 H16 M11 10.500 H16" stroke="#5c7088" stroke-width="1"/><path d="M3.800 1.300 L1.600 3.800 Q1.800 6.500 6 7.200" stroke="#dcc458" stroke-width="1.500" fill="none" stroke-dasharray="1.200 .5"/><path d="M5.600 3.600 L9.900 7.300 L6 10.800 L6.300 8.300 Q4 8.300 2.500 6.500 L5.900 6.200Z" fill="#d8bc48"/></svg>
<div class="a c" style="left:53px;font-size:11.1px">12.10.2021 - 12.10.2021</div>
<div class="a c" style="left:211px">Wyjazd do kina Helios w No...</div>
<div class="a c" style="left:1158px">Zatwierdzona</div>
<div class="a c" style="left:1315px">Nie</div>
<div class="a c" style="left:1472px">Nie</div>
</div>
<div class="a row" style="top:420px;background:#e7e7e7">
<div class="a cb"></div>
<svg style="left:28px;top:3px" width="17" height="15"><path d="M5 1.500 H16 M5 13.500 H16 M11 4.500 H16 M11 6.500 H16 M11 8.500 H16 M11 10.500 H16" stroke="#5c7088" stroke-width="1"/><path d="M3.800 1.300 L1.600 3.800 Q1.800 6.500 6 7.200" stroke="#dcc458" stroke-width="1.500" fill="none" stroke-dasharray="1.200 .5"/><path d="M5.600 3.600 L9.900 7.300 L6 10.800 L6.300 8.300 Q4 8.300 2.500 6.500 L5.900 6.200Z" fill="#d8bc48"/></svg>
<div class="a c" style="left:53px;font-size:11.1px">12.10.2021 - 12.10.2021</div>
<div class="a c" style="left:211px">Piesza wycieczka w góry.</div>
<div class="a c" style="left:1158px">Zatwierdzona</div>
<div class="a c" style="left:1315px">Nie</div>
<div class="a c" style="left:1472px">Nie</div>
</div>
<div class="a row" style="top:441px;background:#dfdfdf">
<div class="a cb"></div>
<svg style="left:28px;top:3px" width="17" height="15"><path d="M5 1.500 H16 M5 13.500 H16 M11 4.500 H16 M11 6.500 H16 M11 8.500 H16 M11 10.500 H16" stroke="#5c7088" stroke-width="1"/><path d="M3.800 1.300 L1.600 3.800 Q1.800 6.500 6 7.200" stroke="#dcc458" stroke-width="1.500" fill="none" stroke-dasharray="1.200 .5"/><path d="M5.600 3.600 L9.900 7.300 L6 10.800 L6.300 8.300 Q4 8.300 2.500 6.500 L5.900 6.200Z" fill="#d8bc48"/></svg>
<div class="a c" style="left:53px;font-size:11.1px">26.10.2021 - 26.10.2021</div>
<div class="a c" style="left:211px">Wycieczka do Kopalni Soli w...</div>
<div class="a c" style="left:1158px">Niezatwierdzona</div>
<div class="a c" style="left:1315px">Tak</div>
<div class="a c" style="left:1472px">Tak</div>
</div>
<div class="a row" style="top:462px;background:#e7e7e7">
<div class="a cb"></div>
<svg style="left:28px;top:3px" width="17" height="15"><path d="M5 1.500 H16 M5 13.500 H16 M11 4.500 H16 M11 6.500 H16 M11 8.500 H16 M11 10.500 H16" stroke="#5c7088" stroke-width="1"/><path d="M3.800 1.300 L1.600 3.800 Q1.800 6.500 6 7.200" stroke="#dcc458" stroke-width="1.500" fill="none" stroke-dasharray="1.200 .5"/><path d="M5.600 3.600 L9.900 7.300 L6 10.800 L6.300 8.300 Q4 8.300 2.500 6.500 L5.900 6.200Z" fill="#d8bc48"/></svg>
<div class="a c" style="left:53px;font-size:11.1px">29.10.2021 - 29.10.2021</div>
<div class="a c" style="left:211px">Wycieczka do Kopalni Soli w...</div>
<div class="a c" style="left:1158px">Niezatwierdzona</div>
<div class="a c" style="left:1315px">Tak</div>
<div class="a c" style="left:1472px">Tak</div>
</div>
<div class="a row" style="top:483px;background:#dfdfdf">
<div class="a cb"></div>
<svg style="left:28px;top:3px" width="17" height="15"><path d="M5 1.500 H16 M5 13.500 H16 M11 4.500 H16 M11 6.500 H16 M11 8.500 H16 M11 10.500 H16" stroke="#5c7088" stroke-width="1"/><path d="M3.800 1.300 L1.600 3.800 Q1.800 6.500 6 7.200" stroke="#dcc458" stroke-width="1.500" fill="none" stroke-dasharray="1.200 .5"/><path d="M5.600 3.600 L9.900 7.300 L6 10.800 L6.300 8.300 Q4 8.300 2.500 6.500 L5.900 6.200Z" fill="#d8bc48"/></svg>
<div class="a c" style="left:53px;font-size:11.1px">29.10.2021 - 29.10.2021</div>
<div class="a c" style="left:211px">Wycieczka do Kopalni Soli w...</div>
<div class="a c" style="left:1158px">Niezatwierdzona</div>
<div class="a c" style="left:1315px">Tak</div>
<div class="a c" style="left:1472px">Tak</div>
</div>
<div class="a" style="left:1896px;top:169px;width:24px;height:976px;background:linear-gradient(90deg,#a5b4c8 0,#a9b8cb 60%,#b8c4d5 72%,#bac6d6 100%);border:1px solid #b4c1d2;border-right:0"></div>
<div class="a" style="left:1902px;top:175px;width:13px;height:13px;border-radius:2px;background:#c6d2e0"></div>
<svg style="left:1904px;top:178px" width="9" height="7"><path d="M4 .5 L1 3.500 L4 6.500 M8 .5 L5 3.500 L8 6.500" stroke="#6a82a8" stroke-width="1.100" fill="none"/></svg>
<div class="a" style="left:1915px;top:193px;transform:rotate(90deg);transform-origin:0 0;font-size:11.6px;font-weight:bold;color:#e6e8ee;line-height:14px">Pobieranie przygotowanych plików</div>
<div class="a" style="left:5px;top:1145px;font-size:11.300px;letter-spacing:.55px;line-height:14px;color:#9fa5ae;text-decoration:underline">VULCAN sp. z o. o., Uonet+, wersja 21.10.0010.47230</div>
<div class="a" style="left:1750px;top:1145px;font-size:11.300px;letter-spacing:.5px;line-height:14px;color:#b0aca2;text-decoration:underline">Polityka prywatności i cookies</div>
<!-- MODAL -->
<div class="a" style="left:635px;top:318px;width:650px;height:595px;border-radius:5px;background:#8ba0b9;border:1px solid #687a8e;box-shadow:inset 0 1px 0 #a6bcd6,1px 1px 5px rgba(0,0,0,.45)"></div>
<div class="a" style="left:641px;top:343.600px;width:638.200px;height:563.400px;background:#fff"></div>
<div class="a" style="left:641px;top:864px;width:638px;height:1px;background:#9fb0c5"></div>
<div class="a" style="left:1265px;top:324px;width:13px;height:13px;border-radius:2px;background:#d6e4fa;border:1px solid #f4f8ff"></div>
<svg style="left:1267px;top:326px" width="9" height="9"><path d="M.8 .8 L8.200 8.200 M8.200 .8 L.8 8.200" stroke="#2a3f8a" stroke-width="1.300" fill="none"/></svg>
<div class="a lb" style="left:656px;top:364px">Data od:<i>*</i></div>
<div class="a in" style="left:861px;top:359px;width:128px;height:22px;">22.10.2021</div>
<div class="a tr" style="left:989px;top:359px"></div>
<svg style="left:991px;top:363px" width="12" height="12"><rect x=".5" y=".5" width="11" height="11" fill="#f4f6fa" stroke="#7a8aa8" stroke-width=".9"/><rect x=".5" y=".5" width="11" height="2.500" fill="#8a9ab8"/><path d="M.5 6 H11.500 M.5 9 H11.500 M4 3 V11.500 M8 3 V11.500" stroke="#b8c0d0" stroke-width=".6"/><circle cx="9" cy="5.200" r="1.700" fill="#fff" stroke="#8a0a14" stroke-width="1.200"/></svg>
<div class="a lb" style="left:1026px;top:364px">Data do:<i>*</i></div>
<div class="a in" style="left:1111px;top:359px;width:136px;height:22px;">22.10.2021</div>
<div class="a tr" style="left:1247px;top:359px"></div>
<svg style="left:1249px;top:363px" width="12" height="12"><rect x=".5" y=".5" width="11" height="11" fill="#f4f6fa" stroke="#7a8aa8" stroke-width=".9"/><rect x=".5" y=".5" width="11" height="2.500" fill="#8a9ab8"/><path d="M.5 6 H11.500 M.5 9 H11.500 M4 3 V11.500 M8 3 V11.500" stroke="#b8c0d0" stroke-width=".6"/><circle cx="9" cy="5.200" r="1.700" fill="#fff" stroke="#8a0a14" stroke-width="1.200"/></svg>
<div class="a lb" style="left:656px;top:391px">Informacje o wycieczce:<i>*</i></div>
<div class="a" style="left:861px;top:386px;width:403px;height:22px;border:1px solid #cc3300;background:#fff"></div>
<svg style="left:862px;top:404px" width="401" height="3" shape-rendering="crispEdges"><defs><pattern id="zz" width="4" height="3" patternUnits="userSpaceOnUse"><rect x="2" y="0" width="2" height="1" fill="#ff8282"/><rect x="0" y="1" width="4" height="1" fill="#ff8282"/><rect x="0" y="2" width="2" height="1" fill="#ff8282"/></pattern></defs><rect width="401" height="3" fill="url(#zz)"/></svg>
<div class="a lb" style="left:656px;top:418px">Nieobecność oddziału/grupy:<i>*</i></div>
<div class="a in" style="left:861px;top:413px;width:386px;height:22px;">całodzienna</div>
<div class="a tr" style="left:1247px;top:413px"></div>
<svg style="left:1250px;top:421px" width="10" height="6"><path d="M.2 1.300 L1.900 .3 L4.600 2.700 L7.300 .3 L9 1.300 L4.600 5.500Z" fill="#1c2f6e"/></svg>
<div class="a lb" style="left:656px;top:445px">Dotyczy pór lekcji od:<i>*</i></div>
<div class="a in" style="left:861px;top:440px;width:128px;height:22px;word-spacing:1.2px;">1. 08:00 - 08:45</div>
<div class="a tr" style="left:989px;top:440px"></div>
<svg style="left:992px;top:448px" width="10" height="6"><path d="M.2 1.300 L1.900 .3 L4.600 2.700 L7.300 .3 L9 1.300 L4.600 5.500Z" fill="#1c2f6e"/></svg>
<div class="a lb" style="left:1026px;top:445px">do:<i>*</i></div>
<div class="a in" style="left:1111px;top:440px;width:136px;height:22px;word-spacing:1.2px;">8. 14:30 - 15:15</div>
<div class="a tr" style="left:1247px;top:440px"></div>
<svg style="left:1250px;top:448px" width="10" height="6"><path d="M.2 1.300 L1.900 .3 L4.600 2.700 L7.300 .3 L9 1.300 L4.600 5.500Z" fill="#1c2f6e"/></svg>
<div class="a lb" style="left:656px;top:472px">Typ wpisu frekwencji:<i>*</i></div>
<div class="a in" style="left:861px;top:467px;width:356px;height:22px;">Nie uwzględniaj</div>
<div class="a tr" style="left:1217px;top:467px"></div>
<svg style="left:1220px;top:475px" width="10" height="6"><path d="M.2 1.300 L1.900 .3 L4.600 2.700 L7.300 .3 L9 1.300 L4.600 5.500Z" fill="#1c2f6e"/></svg>
<svg style="left:1241px;top:470px" width="15" height="15"><defs><linearGradient id="ig" x1="0" y1="0" x2="0" y2="1"><stop offset="0" stop-color="#8ab4e6"/><stop offset="1" stop-color="#3f78c4"/></linearGradient></defs><circle cx="7.500" cy="7.500" r="7" fill="#3a6ab2"/><circle cx="7.500" cy="7.500" r="5.700" fill="url(#ig)" stroke="#9cc0ea" stroke-width=".7"/><circle cx="7.600" cy="4.300" r="1.100" fill="#fff"/><path d="M6 6.300 H8.500 V10 H9.300 V11 H5.900 V10 H6.800 V7.300 H6Z" fill="#fff"/></svg>
<div class="a lb" style="left:656px;top:499px">Cel wycieczki:<i>*</i></div>
<div class="a in" style="left:861px;top:494px;width:403px;height:100px;"></div>
<div class="a lb" style="left:656px;top:604px"><span style="letter-spacing:.09px">Nazwa kraju/miasto/trasa wycieczki:</span></div>
<div class="a in" style="left:861px;top:599px;width:403px;height:100px;"></div>
<div class="a lb" style="left:656px;top:709px">Środek transportu:</div>
<div class="a in" style="left:861px;top:704px;width:403px;height:22px;"></div>
<div class="a lb" style="left:656px;top:736px">Kierownik wycieczki:<i>*</i></div>
<div class="a in" style="left:861px;top:731px;width:386px;height:22px;">Dudka Marian [MD]</div>
<div class="a tr" style="left:1247px;top:731px"></div>
<svg style="left:1250px;top:739px" width="10" height="6"><path d="M.2 1.300 L1.900 .3 L4.600 2.700 L7.300 .3 L9 1.300 L4.600 5.500Z" fill="#1c2f6e"/></svg>
<div class="a lb" style="left:656px;top:763px">Kierownik spoza szkoły:</div>
<div class="a in" style="left:861px;top:758px;width:373px;height:22px;"></div>
<svg style="left:1241px;top:761px" width="15" height="15"><defs><linearGradient id="ig" x1="0" y1="0" x2="0" y2="1"><stop offset="0" stop-color="#8ab4e6"/><stop offset="1" stop-color="#3f78c4"/></linearGradient></defs><circle cx="7.500" cy="7.500" r="7" fill="#3a6ab2"/><circle cx="7.500" cy="7.500" r="5.700" fill="url(#ig)" stroke="#9cc0ea" stroke-width=".7"/><circle cx="7.600" cy="4.300" r="1.100" fill="#fff"/><path d="M6 6.300 H8.500 V10 H9.300 V11 H5.900 V10 H6.800 V7.300 H6Z" fill="#fff"/></svg>
<div class="a lb" style="left:656px;top:790px">Liczba uczniów niepełnosprawnych:</div>
<div class="a in" style="left:861px;top:785px;width:403px;height:22px;"></div>
<div class="a" style="left:656px;top:822px;color:#000;font-size:11.7px;line-height:14.500px">Po uzupełnieniu niezbędnych danych związanych z wycieczką podana Informacja o wycieczce zostanie<br><span style="letter-spacing:.085px">automatycznie przeniesiona do Dziennika oddziału zakładki Tematy wyłącznie we wskazanym zakresie pór lekcji.</span></div>
<div class="a btn" style="left:1139px;width:60px;padding-left:22px">Zapisz</div>
<svg style="left:1143px;top:880px" width="14" height="13"><defs><linearGradient id="ck" x1="0" y1="0" x2="0" y2="1"><stop offset="0" stop-color="#9cd058"/><stop offset="1" stop-color="#58a428"/></linearGradient></defs><path d="M.2 7.600 L3.300 5.700 L6.200 9.800 L13.300 .2 L14.300 .9 L7.600 13.700 L5.300 13.700Z" fill="url(#ck)"/></svg>
<div class="a btn" style="left:1209px;width:60px;padding-left:22px">Anuluj</div>
<svg style="left:1213px;top:879px" width="14" height="14"><circle cx="6.800" cy="7" r="5.300" fill="#f8e4d8" stroke="#d8541e" stroke-width="2.500"/><path d="M3.200 3.400 L10.400 10.600" stroke="#d8541e" stroke-width="2.500"/></svg>
<div class="a" style="left:1263px;top:496px;width:500px;height:105px;border:1px solid #8fa0b5;border-radius:3px;background:#e4eaf2"></div>
<div class="a" style="left:1286px;top:517px;color:#444;font-size:11px;line-height:13px">W Dzienniki oddziału zakładce Frekwencji w przypadku wybrania opcji "nie uwzględniaj" nie<br>zostaną odnotowane wpisy dla uczniów. Jeśli zostanie wybrany konkretny wpis będzie on<br>uwzględniony dla każdego ucznia biorącego udział w wycieczce, dla którego uczestnictwo jest<br>potwierdzone. W przypadku uczniów, którzy nie uczestniczyli w danych dniach zostanie<br>odnotowany typ wpisu frekwencyjnego o kategorii nieobecny</div>
<!-- TASKBAR -->
<div class="a" id="taskbar"></div>
<svg style="left:16px;top:1172px" width="16" height="16"><path d="M0 2.300 L6.500 1.400 V7.600 H0Z M7.500 1.250 L16 0 V7.600 H7.500Z M0 8.500 H6.500 V14.700 L0 13.800Z M7.500 8.500 H16 V16 L7.500 14.800Z" fill="#fff"/></svg>
<div class="a" style="left:48px;top:1160px;width:344px;height:40px;background:#f2f2f2;border-top:1px solid #d0d0d0"></div>
<svg style="left:60px;top:1172px" width="17" height="17"><circle cx="10.500" cy="6.500" r="5" fill="none" stroke="#1b1b1b" stroke-width="1.300"/><path d="M7 10 L.8 16.200" stroke="#1b1b1b" stroke-width="1.400"/></svg>
<div class="a" style="left:88.500px;top:1171.700px;font-size:14.6px;line-height:19px;color:#1b1b1b">Wpisz tu wyszukiwane słowa</div>
<!-- task view -->
<svg style="left:407px;top:1171px" width="18" height="17"><path d="M1 3.400 V2 H11.500 V3.400 M1 15.100 V16.500 H11.500 V15.100" stroke="#fff" stroke-width="1.100" fill="none"/><rect x="1" y="5.800" width="10.500" height="7" fill="none" stroke="#fff" stroke-width="1.100"/><path d="M15.500 1.500 V16.500" stroke="#fff" stroke-width="1.100"/><rect x="14.200" y="3.800" width="2.700" height="2.700" fill="#fff"/></svg>
<!-- edge -->
<svg style="left:455px;top:1167px" width="26" height="26"><defs><linearGradient id="eg1" x1="0" y1="0" x2="1" y2="0"><stop offset="0" stop-color="#1a98dc"/><stop offset=".55" stop-color="#34c08c"/><stop offset="1" stop-color="#68d454"/></linearGradient><linearGradient id="eg2" x1="0" y1="0" x2="1" y2="1"><stop offset="0" stop-color="#1a80d4"/><stop offset="1" stop-color="#0c4c9c"/></linearGradient></defs><path d="M.5 13 Q1 7 7 6.800 Q12 6.500 12.500 9.500 Q8.500 9.800 8 14 Q8.500 19.500 15 20.500 Q19.500 20.800 22.800 18.500 Q20 24.300 13 24.300 Q1.500 23.500 .5 13Z" fill="url(#eg2)"/><path d="M.6 12.500 Q1.500 1 12.500 .8 Q23.800 1.200 24.300 11.500 Q24.300 16.800 19.800 17 Q16.300 16.800 16.600 14 Q17.500 9.300 12 8.200 Q5 7.300 .6 12.500Z" fill="url(#eg1)"/><circle cx="5.800" cy="19" r="5.400" fill="#d6d6d6"/><circle cx="5.800" cy="17.300" r="2" fill="#8c8c8c"/><path d="M2.100 22 Q2.300 19.800 5.800 19.800 Q9.300 19.800 9.500 22 Q7.800 24 5.800 24 Q3.800 24 2.100 22Z" fill="#8c8c8c"/></svg>
<!-- explorer -->
<svg style="left:505px;top:1170px" width="23" height="19"><path d="M0 1.500 Q0 .5 1 .5 H8.500 L10 2.500 H0Z" fill="#e0a82a"/><rect x="0" y="2.500" width="22.500" height="16" rx="1" fill="#fbd768"/><rect x="0" y="2.500" width="22.500" height="3" fill="#f2c040"/><path d="M4 18.500 V11.500 H18.500 V18.500 H15 V14.500 H7.500 V18.500Z" fill="#3a96e0"/></svg>
<!-- firefox -->
<svg style="left:553px;top:1167px" width="24" height="26" viewBox="0 0 26 28"><defs><radialGradient id="ff1" cx=".7" cy=".2" r="1"><stop offset="0" stop-color="#ffe14a"/><stop offset=".35" stop-color="#ff9a1e"/><stop offset=".7" stop-color="#ff3c4e"/><stop offset="1" stop-color="#e0207a"/></radialGradient></defs><path d="M16 1 Q21 4.500 21.500 9 Q24.500 11 24.500 16.500 A11.800 11.800 0 0 1 1 16.500 Q1 10.500 4.500 7 Q4.500 9 5.500 9.500 Q7 5 11 5.500 Q13 6 15.500 5 Q17 3.500 16 1Z" fill="url(#ff1)"/><circle cx="13" cy="15.500" r="6.300" fill="#7a3ee0"/><path d="M6.500 13 Q9 10.500 13.500 11.500 Q11 13 11.500 15 Q15 15 15 18 Q12 20.500 8.500 19 Q11 19.500 12 18 Q7 17.500 6.500 13Z" fill="#ff8a1e"/></svg>
<!-- chrome -->
<div class="a" style="left:590px;top:1160px;width:48px;height:40px;background:#4b5d67"></div>
<div class="a" style="left:590px;top:1198px;width:48px;height:2px;background:#7cbcee"></div>
<svg style="left:602px;top:1168px" width="24" height="24"><circle cx="12" cy="12" r="11.400" fill="#db4437"/><path d="M12 6.700 L22.200 6.700 A11.500 11.500 0 0 1 11.490 23.480 L16.590 14.650Z" fill="#ffcd40"/><path d="M16.590 14.650 L11.490 23.480 A11.500 11.500 0 0 1 2.310 5.820 L7.410 14.650Z" fill="#0f9d58"/><circle cx="12" cy="12" r="5.300" fill="#f1f1f1"/><circle cx="12" cy="12" r="4.200" fill="#4285f4"/></svg>
<!-- tray -->
<svg style="left:1638px;top:1175px" width="14" height="9"><path d="M1 8 L7 2 L13 8" stroke="#fff" stroke-width="1.300" fill="none"/></svg>
<svg style="left:1661px;top:1174px" width="17" height="11"><path d="M3.500 10.500 Q.3 10.500 .3 7.800 Q.3 5.500 2.800 5.200 Q3.500 1.800 7 1.800 Q9 1.800 10 3.300 Q13.500 2.800 14 6 Q16.700 6.500 16.700 8.500 Q16.700 10.500 14.500 10.500Z" fill="#1e8ad8"/><path d="M3 5.200 Q3.800 1.800 7 1.800 Q9 1.800 10 3.300 Q8 3.800 7.200 5.800 Q5 4.800 3 5.200Z" fill="#0c5ea8"/></svg>
<svg style="left:1685px;top:1174px" width="17" height="11"><path d="M3.500 10.500 Q.3 10.500 .3 7.800 Q.3 5.500 2.800 5.200 Q3.500 1.800 7 1.800 Q9 1.800 10 3.300 Q13.500 2.800 14 6 Q16.700 6.500 16.700 8.500 Q16.700 10.500 14.500 10.500Z" fill="#e6e6e6"/><path d="M3 5.200 Q3.800 1.800 7 1.800 Q9 1.800 10 3.300 Q8 3.800 7.200 5.800 Q5 4.800 3 5.200Z" fill="#a8a8a8"/></svg>
<svg style="left:1709px;top:1174px" width="17" height="11"><path d="M3.500 10.500 Q.3 10.500 .3 7.800 Q.3 5.500 2.800 5.200 Q3.500 1.800 7 1.800 Q9 1.800 10 3.300 Q13.500 2.800 14 6 Q16.700 6.500 16.700 8.500 Q16.700 10.500 14.500 10.500Z" fill="#1e8ad8"/><path d="M3 5.200 Q3.800 1.800 7 1.800 Q9 1.800 10 3.300 Q8 3.800 7.200 5.800 Q5 4.800 3 5.200Z" fill="#0c5ea8"/></svg>
<svg style="left:1733px;top:1176px" width="17" height="10"><rect x=".6" y=".6" width="13.500" height="8.600" fill="none" stroke="#fff" stroke-width="1.200"/><rect x="2.300" y="2.300" width="8" height="5.200" fill="#fff"/><rect x="14.500" y="3" width="1.500" height="3.800" fill="#fff"/></svg>
<svg style="left:1757px;top:1174px" width="17" height="14"><rect x="3.500" y=".6" width="12.500" height="8.500" fill="none" stroke="#fff" stroke-width="1.100"/><path d="M9.500 9 V12.500 M6 12.800 H13" stroke="#fff" stroke-width="1.100"/><rect x=".6" y="1.600" width="3.800" height="3.400" fill="#1b2740" stroke="#fff" stroke-width=".9"/><path d="M2.500 5 V12.500 H6" stroke="#fff" stroke-width="1" fill="none"/></svg>
<svg style="left:1781px;top:1173px" width="17" height="15"><path d="M.8 5 H3.500 L7.500 1.300 V13.700 L3.500 10 H.8Z" fill="none" stroke="#fff" stroke-width="1.100"/><path d="M9.500 5 Q11 7.500 9.500 10 M11.700 3.300 Q14.200 7.500 11.700 11.700" stroke="#fff" stroke-width="1.100" fill="none"/><path d="M14 1.500 Q17.300 7.500 14 13.500" stroke="#7a8494" stroke-width="1" fill="none"/></svg>
<div class="a tk" style="left:1820.8px;top:1163.5px">13:47</div>
<div class="a tk" style="left:1807px;top:1181.500px">22.10.2021</div>
<svg style="left:1878px;top:1172px" width="25" height="24"><path d="M.5 .5 H16.500 V12 H6 V15.500 L2.500 12 H.5Z" fill="#fff"/><path d="M3 3.500 H14 M3 6.200 H14 M3 9 H14" stroke="#1b2740" stroke-width="1"/><circle cx="16.500" cy="15" r="7.500" fill="#2a2e36" stroke="#5a5e66" stroke-width="1"/></svg>
<div class="a" style="left:1890.500px;top:1180px;color:#fff;font-size:12px;font-weight:bold;line-height:14px">4</div>
<div class="a" style="left:1915px;top:1160px;width:1px;height:40px;background:#4a5466"></div>
</body></html>
